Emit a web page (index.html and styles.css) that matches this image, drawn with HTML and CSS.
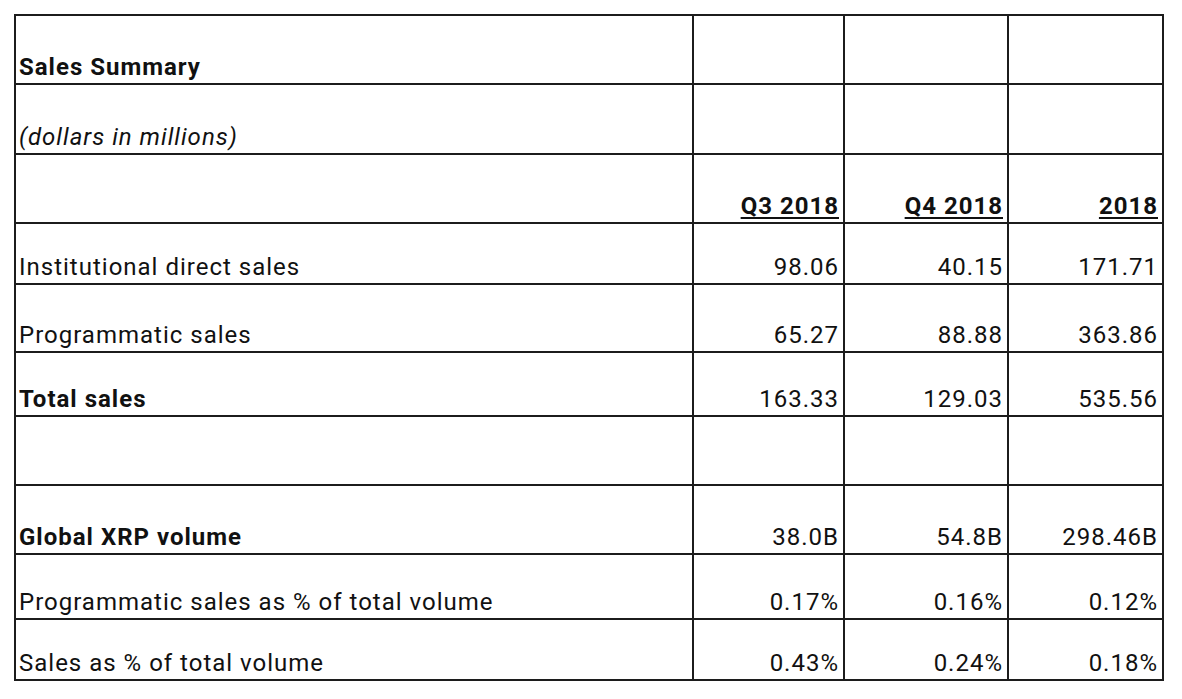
FILE: index.html
```html
<!DOCTYPE html>
<html>
<head>
<meta charset="utf-8">
<link rel="stylesheet" href="styles.css">
</head>
<body>
<table class="sheet">
  <colgroup>
    <col class="c-label">
    <col class="c-q3">
    <col class="c-q4">
    <col class="c-yr">
  </colgroup>
  <tr class="r1"><td class="bold">Sales Summary</td><td></td><td></td><td></td></tr>
  <tr class="r2"><td class="ital">(dollars in millions)</td><td></td><td></td><td></td></tr>
  <tr class="r3"><td></td><td class="num head">Q3 2018</td><td class="num head">Q4 2018</td><td class="num head">2018</td></tr>
  <tr class="r4"><td>Institutional direct sales</td><td class="num">98.06</td><td class="num">40.15</td><td class="num">171.71</td></tr>
  <tr class="r5"><td>Programmatic sales</td><td class="num">65.27</td><td class="num">88.88</td><td class="num">363.86</td></tr>
  <tr class="r6"><td class="bold">Total sales</td><td class="num">163.33</td><td class="num">129.03</td><td class="num">535.56</td></tr>
  <tr class="r7"><td></td><td></td><td></td><td></td></tr>
  <tr class="r8"><td class="bold">Global XRP volume</td><td class="num">38.0B</td><td class="num">54.8B</td><td class="num">298.46B</td></tr>
  <tr class="r9"><td>Programmatic sales as % of total volume</td><td class="num">0.17%</td><td class="num">0.16%</td><td class="num">0.12%</td></tr>
  <tr class="r10"><td>Sales as % of total volume</td><td class="num">0.43%</td><td class="num">0.24%</td><td class="num">0.18%</td></tr>
</table>
</body>
</html>
```
FILE: styles.css
```css
html, body {
  margin: 0;
  padding: 0;
  background: #ffffff;
}
body {
  padding: 14px 0 0 14px;
  font-family: Roboto, "Liberation Sans", Arial, sans-serif;
  color: #111111;
}
.sheet {
  border-collapse: collapse;
  table-layout: fixed;
  width: 1150px;
}
.c-label { width: 678px; }
.c-q3 { width: 151px; }
.c-q4 { width: 164px; }
.c-yr { width: 155px; }
.sheet td {
  border: 2px solid #1c1c1c;
  font-size: 24px;
  line-height: 28px;
  letter-spacing: 1px;
  padding: 0 4px 2px 3px;
  vertical-align: bottom;
  white-space: nowrap;
  overflow: hidden;
}
.sheet td.num { text-align: right; }
.sheet td.bold { font-weight: 700; }
.sheet td.ital { font-style: italic; }
.sheet td.head { font-weight: 700; text-decoration: underline; text-decoration-thickness: 2px; text-underline-offset: 3px; }
.r1 { height: 69px; }
.r2 { height: 70px; }
.r3 { height: 69px; }
.r4 { height: 61px; }
.r5 { height: 68px; }
.r6 { height: 64px; }
.r7 { height: 69px; }
.r8 { height: 69px; }
.r9 { height: 65px; }
.r10 { height: 61px; }
```
